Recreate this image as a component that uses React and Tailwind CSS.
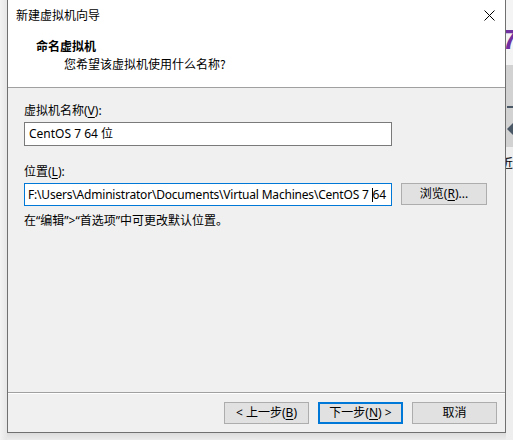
import React from "react";

function CloseIcon() {
  return (
    <svg width="11" height="11" viewBox="0 0 11 11" className="block">
      <path d="M0.5 0.5 L10.5 10.5 M10.5 0.5 L0.5 10.5" stroke="#000" strokeWidth="1" fill="none" />
    </svg>
  );
}

function Btn({ children, primary }) {
  return (
    <div
      className={
        "w-[85px] h-[22px] flex items-center justify-center bg-[#e1e1e1] text-[12px] leading-[16px] text-black " +
        (primary ? "border-2 border-[#0078d7]" : "border border-[#adadad]")
      }
    >
      {children}
    </div>
  );
}

export default function App() {
  return (
    <div className="w-[513px] h-[440px] flex bg-[#e9e9e9] overflow-hidden font-['Noto_Sans','Noto_Sans_CJK_SC',sans-serif] text-black">
      {/* left shadow strip */}
      <div className="w-[7px] h-full bg-gradient-to-r from-[#f3f3f3] to-[#e6e6e6]" />

      {/* window */}
      <div className="flex flex-col shrink-0">
        <div className="w-[499px] h-[433px] flex flex-col border-x border-b border-[#707070] bg-[#f0f0f0]">
          {/* header */}
          <div className="h-[88px] bg-white border-b border-[#a0a0a0] flex flex-col">
            <div className="h-[30px] flex items-center justify-between pl-[8px] pr-[10px]">
              <span className="text-[12px] leading-[16px] font-['Noto_Sans_CJK_SC',sans-serif]">新建虚拟机向导</span>
              <CloseIcon />
            </div>
            <div className="pl-[28px] pt-[8px] text-[12px] leading-[16px] font-bold font-['Noto_Sans_CJK_SC',sans-serif]">
              命名虚拟机
            </div>
            <div className="pl-[56px] pt-[2px] text-[12px] leading-[16px] font-['Noto_Sans_CJK_SC',sans-serif]">
              您希望该虚拟机使用什么名称?
            </div>
          </div>

          {/* body */}
          <div className="flex-1 flex flex-col px-[16px] pt-[15px] text-[12px] leading-[16px]">
            <div>
              虚拟机名称(<u className="underline-offset-2">V</u>):
            </div>
            <div className="mt-[3px] w-[368px] h-[24px] bg-white border border-[#7a7a7a] flex items-center pl-[4px]">
              CentOS 7 64 位
            </div>
            <div className="mt-[18px]">
              位置(<u className="underline-offset-2">L</u>):
            </div>
            <div className="mt-[3px] flex items-start gap-[9px]">
              <div className="w-[368px] h-[23px] bg-white border border-[#0078d7] flex items-center pl-[3px] overflow-hidden whitespace-nowrap tracking-[-0.2px]">
                <span>F:\Users\Administrator\Documents\Virtual Machines\CentOS 7&nbsp;</span>
                <span className="w-px h-[14px] bg-black" />
                <span>64</span>
              </div>
              <div className="w-[86px] h-[22px] bg-[#e1e1e1] border border-[#adadad] flex items-center justify-center">
                浏览(<u className="underline-offset-2">R</u>)...
              </div>
            </div>
            <div className="mt-[7px]">在“编辑”&gt;“首选项”中可更改默认位置。</div>

            <div className="flex-1" />
          </div>

          {/* footer */}
          <div className="border-t border-[#a0a0a0] shadow-[inset_0_1px_0_#ffffff] pt-[9px] pb-[8px] pr-[8px] flex justify-end gap-[9px]">
            <Btn>
              &lt; 上一步(<u className="underline-offset-2">B</u>)
            </Btn>
            <Btn primary>
              下一步(<u className="underline-offset-2">N</u>) &gt;
            </Btn>
            <Btn>取消</Btn>
          </div>
        </div>
        <div className="flex-1 bg-gradient-to-b from-[#dcdcdc] to-[#ececec]" />
      </div>

      {/* right background strip */}
      <div className="flex-1 flex flex-col overflow-hidden">
        <div className="h-[65px] bg-[#f4f4f4] overflow-hidden relative">
          <span className="absolute left-[-4px] top-[24px] text-[28px] leading-[32px] font-bold text-[#7030a0] font-['Liberation_Sans',sans-serif]">7</span>
        </div>
        <div className="h-[82px] bg-[#d2d2d2] relative overflow-hidden">
          <div className="absolute left-[1px] top-[41px] w-[8px] h-[2px] bg-[#4a5866]" />
          <div className="absolute left-[1px] top-[57px] w-0 h-0 border-y-[7px] border-y-transparent border-r-[7px] border-r-[#4a5866]" />
        </div>
        <div className="flex-1 bg-[#eeeeee] relative overflow-hidden">
          <span className="absolute left-[-5px] top-[8px] text-[12px] leading-[16px] text-black font-['Noto_Sans_CJK_SC',sans-serif]">近</span>
        </div>
      </div>
    </div>
  );
}
